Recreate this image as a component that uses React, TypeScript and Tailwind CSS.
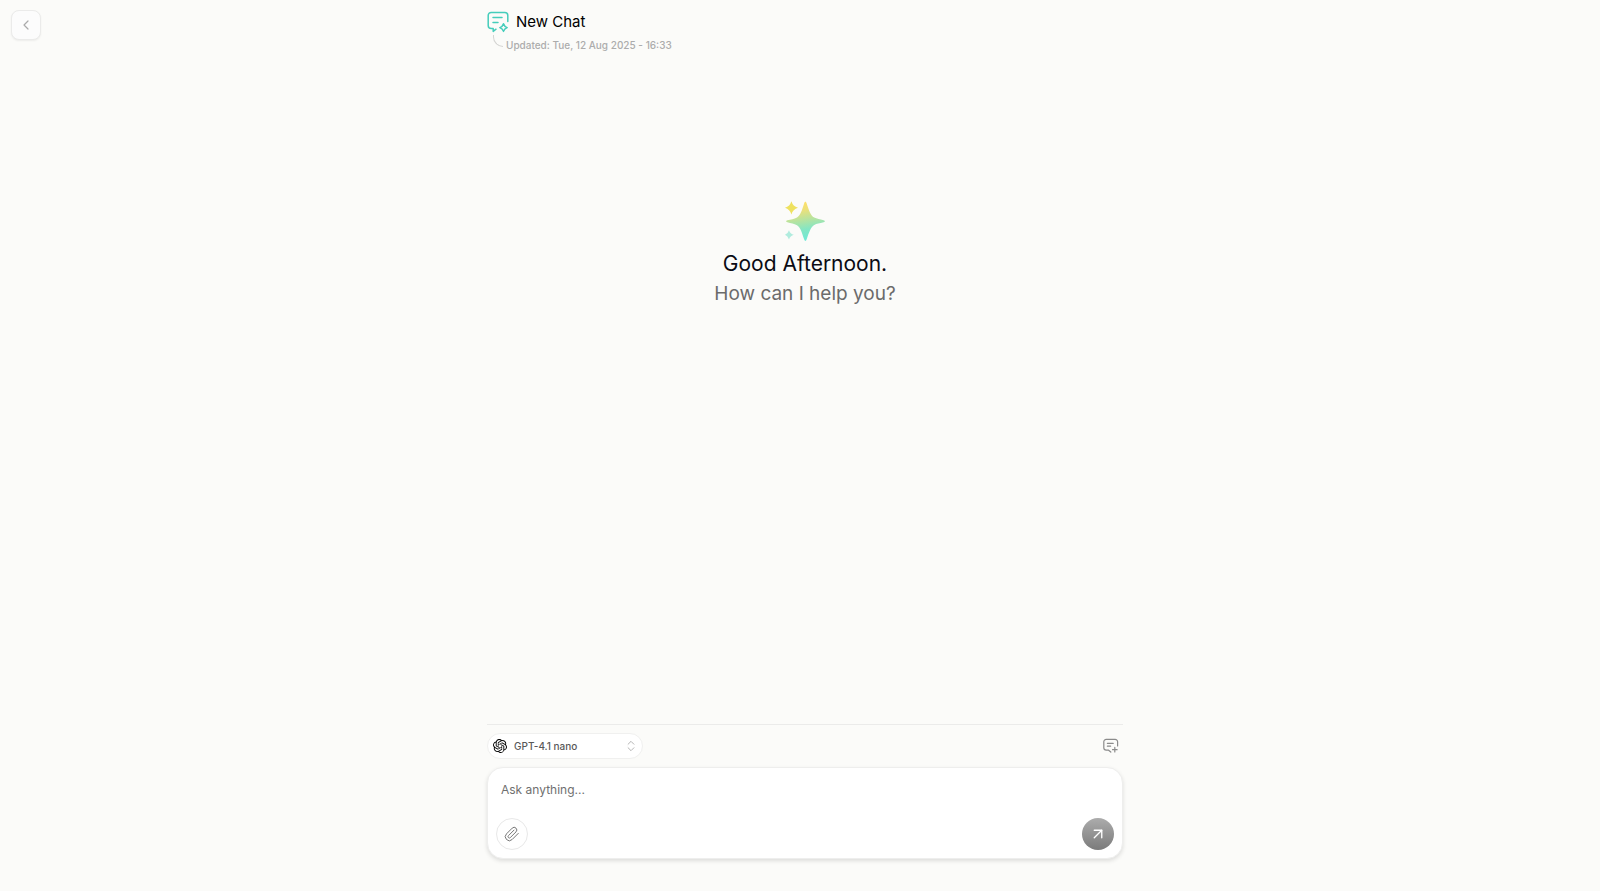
import { ArrowUpRight, ChevronLeft, ChevronsUpDown } from "lucide-react";
import { SiOpenai } from "react-icons/si";

const ChatIcon = () => {
  return (
    <svg className="h-[22px] w-[22px] text-[#45cdbb]" viewBox="0 0 22 22" fill="none" stroke="currentColor" strokeWidth="1.5" strokeLinecap="round" strokeLinejoin="round">
      <path d="M9 18.2 6.2 20.4V17.6H4.2A3 3 0 0 1 1.2 14.6V4.4A3 3 0 0 1 4.2 1.4H17.8A3 3 0 0 1 20.8 4.4V10.4" />
      <path d="M6 6.6H15M6 11.4H11" />
      <path d="M16.5 12.8Q17.4 15.7 20.2 16.6Q17.4 17.5 16.5 20.4Q15.6 17.5 12.8 16.6Q15.6 15.7 16.5 12.8Z" />
    </svg>
  );
};

const NewChatIcon = () => {
  return (
    <svg className="h-4 w-4" viewBox="0 0 16 16" fill="none" stroke="currentColor" strokeWidth="1.2" strokeLinecap="round" strokeLinejoin="round">
      <path d="M7.8 14 5.6 12.2H3.2A2.4 2.4 0 0 1 .8 9.8V3.8A2.4 2.4 0 0 1 3.2 1.4H12.2A2.4 2.4 0 0 1 14.6 3.8V8" />
      <path d="M4.4 5.4H10.2M4.4 8.2H7.6" />
      <path d="M11.8 9.4V14M9.5 11.7H14.1" />
    </svg>
  );
};

const ClipIcon = () => {
  return (
    <svg className="h-4 w-4" viewBox="0 0 24 24" fill="none" stroke="currentColor" strokeWidth="1.5" strokeLinecap="round" strokeLinejoin="round">
      <path d="m21.44 11.05-9.19 9.19a6 6 0 0 1-8.49-8.49l8.57-8.57A4 4 0 1 1 18 8.84l-8.59 8.57a2 2 0 0 1-2.83-2.83l8.49-8.48" />
    </svg>
  );
};

const Sparkles = () => {
  return (
    <svg className="h-10 w-10" viewBox="0 0 40 40">
      <defs>
        <linearGradient id="big" x1="0.38" y1="0" x2="0.55" y2="1">
          <stop offset="0" stopColor="#ffe066" />
          <stop offset="0.2" stopColor="#eee078" />
          <stop offset="0.7" stopColor="#84e6c4" />
          <stop offset="1" stopColor="#6ee9d8" />
        </linearGradient>
      </defs>
      <path fill="url(#big)" d="M20.4 0.8C21.1 0.8 21.3 1.4 21.6 2.3C23.8 9 25.6 14.6 29.2 16.6C31.8 18 35 18.2 38.6 19.2C40.4 19.8 40.4 20.6 38.6 21.2C34.5 22.3 31.8 22.4 29.2 24C25.6 26.2 23.8 32 21.6 38.6C21 40.4 19.8 40.4 19.2 38.6C17 32 15.6 26.4 12 24.2C9 22.4 6 22.4 2.4 21.2C0.6 20.6 0.6 19.8 2.4 19.2C6 18.2 9 18 12 16.4C15.6 14.4 17 9 19.2 2.3C19.5 1.4 19.7 0.8 20.4 0.8Z" />
      <path fill="#eee15f" d="M6.4 0.2Q7.9 5.2 13 6.7Q7.9 8.2 6.4 13.4Q4.9 8.2 0 6.7Q4.9 5.2 6.4 0.2Z" />
      <path fill="#b0ecde" d="M4 29.2Q5.2 32.8 8.8 33.8Q5.2 34.8 4 38.6Q2.8 34.8 0 33.8Q2.8 32.8 4 29.2Z" />
    </svg>
  );
};

const Header = () => {
  return (
    <header className="flex flex-col pt-[11px]">
      <div className="flex h-[22px] items-center gap-[7px]">
        <ChatIcon />
        <h1 className="text-[15px] text-black">New Chat</h1>
      </div>
      <div className="flex gap-[3px] pl-1.5">
        <div className="mt-0.5 h-3 w-2.5 rounded-bl-xl border-b border-l border-[#d4d4d2]" />
        <p className="mt-1 text-[10px] leading-4 font-medium text-[#acacac]">Updated: Tue, 12 Aug 2025 - 16:33</p>
      </div>
    </header>
  );
};

const Greeting = () => {
  return (
    <section className="flex flex-1 flex-col items-center pt-[148px]">
      <Sparkles />
      <h2 className="mt-2 text-[21px] leading-[30px] text-[#0b0b14]">Good Afternoon.</h2>
      <p className="text-[19px] leading-[30px] text-[#6b6b6b]">How can I help you?</p>
    </section>
  );
};

const Composer = () => {
  return (
    <div className="flex flex-col border-t border-[#ebebea] pt-2">
      <div className="flex items-center justify-between pr-1">
        <label className="relative flex items-center rounded-full border border-[#f0f0ef] bg-white text-[#585858]">
          <SiOpenai className="pointer-events-none absolute left-[5px] h-3.5 w-3.5 text-black" />
          <select aria-label="Model" className="h-6 w-[154px] appearance-none rounded-full bg-transparent pl-[26px] text-[10px] font-medium outline-none">
            <option>GPT-4.1 nano</option>
          </select>
          <ChevronsUpDown className="pointer-events-none absolute right-1 h-3.5 w-3.5 text-[#aaa]" strokeWidth={1.5} />
        </label>
        <button aria-label="New chat" className="text-[#8b8b8b]">
          <NewChatIcon />
        </button>
      </div>

      <form className="mt-2 flex flex-col rounded-2xl border border-[#eeeeed] bg-white px-2 pt-3 pb-2 shadow-[0_2px_4px_rgba(0,0,0,0.12)]">
        <textarea
          aria-label="Message"
          rows={1}
          placeholder="Ask anything..."
          className="h-[38px] w-full resize-none px-[5px] text-xs leading-5 outline-none placeholder:text-[#6f6f6f]"
        />
        <div className="flex items-center justify-between">
          <button type="button" aria-label="Attach file" className="flex h-8 w-8 items-center justify-center rounded-full border border-[#e8e8e8] text-[#777]">
            <ClipIcon />
          </button>
          <button type="button" aria-label="Send" className="flex h-8 w-8 items-center justify-center rounded-full bg-linear-to-b from-[#acacac] to-[#7b7b7b] text-white">
            <ArrowUpRight className="h-[18px] w-[18px]" strokeWidth={1.8} />
          </button>
        </div>
      </form>
    </div>
  );
};

const App = () => {
  return (
    <div className="relative flex min-h-screen flex-col bg-[#fbfbf9] pl-2.5 font-[Inter,sans-serif]">
      <button aria-label="Back" className="absolute top-2.5 left-[11px] flex h-[30px] w-[30px] items-center justify-center rounded-lg border border-[#ebebea] bg-[#fcfcfc] text-[#aaa] shadow-[0_1px_2px_rgba(0,0,0,0.06)]">
        <ChevronLeft className="h-4 w-4" strokeWidth={1.8} />
      </button>
      <main className="mx-auto flex w-full max-w-[636px] flex-1 flex-col pb-8">
        <Header />
        <Greeting />
        <Composer />
      </main>
    </div>
  );
};

export default App;
